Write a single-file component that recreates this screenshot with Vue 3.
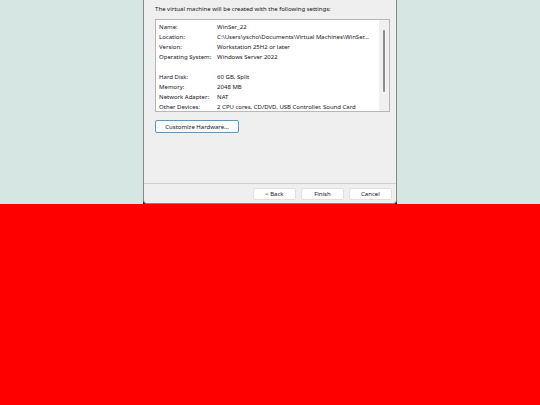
<script setup>
import { ref } from 'vue'

const settings = ref([
  { label: 'Name:', value: 'WinSer_22' },
  { label: 'Location:', value: 'C:\\Users\\yscho\\Documents\\Virtual Machines\\WinSer...' },
  { label: 'Version:', value: 'Workstation 25H2 or later' },
  { label: 'Operating System:', value: 'Windows Server 2022' },
  { label: '', value: '' },
  { label: 'Hard Disk:', value: '60 GB, Split' },
  { label: 'Memory:', value: '2048 MB' },
  { label: 'Network Adapter:', value: 'NAT' },
  { label: 'Other Devices:', value: '2 CPU cores, CD/DVD, USB Controller, Sound Card' },
])

const actions = ['< Back', 'Finish', 'Cancel']
</script>

<template>
  <div class="page">
    <section class="desktop">
      <div class="frame">
        <div class="dialog">
          <main class="content">
            <p class="intro">The virtual machine will be created with the following settings:</p>
            <div class="list">
              <table class="settings">
                <tbody>
                  <tr v-for="(row, i) in settings" :key="i">
                    <th scope="row">{{ row.label }}</th>
                    <td>{{ row.value }}</td>
                  </tr>
                </tbody>
              </table>
              <div class="track"><div class="thumb"></div></div>
            </div>
            <button type="button" class="customize">Customize Hardware...</button>
          </main>
          <footer class="actions">
            <button v-for="action in actions" :key="action" type="button">{{ action }}</button>
          </footer>
        </div>
      </div>
    </section>
    <section class="backdrop"></section>
  </div>
</template>

<style>
body {
  background: #ff0000;
}
</style>

<style scoped>
.page {
  display: flex;
  flex-direction: column;
  min-height: 100vh;
  font-family: "Noto Sans", "Open Sans", sans-serif;
  font-size: 6px;
  line-height: 10px;
  color: #14141c;
}

.desktop {
  display: flex;
  justify-content: center;
  background: #d6e6e3;
}

.backdrop {
  flex: 1;
  background: #ff0000;
}

/* dark backing that shows behind the rounded bottom corners */
.frame {
  width: 47%;
  min-width: 253px;
  background: #16161c;
}

.dialog {
  border: 1px solid #838987;
  border-top: 0;
  border-radius: 0 0 4px 4px;
  background: #efefef;
}

.content {
  padding: 4px 6px 50px 11px;
}

.intro {
  margin: 0 0 5px;
}

.list {
  display: flex;
  border: 1px solid #b4b7b7;
  background: #fff;
}

.settings {
  flex: 1;
  width: 100%;
  min-width: 0;
  margin: 2px 0 -1px 3px;
  border-collapse: collapse;
  table-layout: fixed;
}

.settings th,
.settings td {
  height: 10px;
  padding: 0;
  font-weight: normal;
  text-align: left;
  white-space: nowrap;
}

.settings th {
  width: 58px;
}

.track {
  display: flex;
  flex: none;
  justify-content: center;
  width: 10px;
  padding-top: 10px;
  background: #f0f0f0;
}

.thumb {
  width: 2px;
  height: 62px;
  border-radius: 1px;
  background: #8c8c8c;
}

button {
  box-sizing: border-box;
  height: 12px;
  padding: 0;
  border: 1px solid #e0e0e0;
  border-radius: 2px;
  background: #fdfdfd;
  font: inherit;
  line-height: 10px;
  color: inherit;
  white-space: nowrap;
}

.customize {
  display: block;
  width: 84px;
  height: 13px;
  margin-top: 8px;
  border-color: #4c9cd3;
}

.actions {
  display: flex;
  justify-content: flex-end;
  gap: 5px;
  padding: 4px 4px 3px;
  border-top: 1px solid #cfcfcf;
}

.actions button {
  width: 43px;
}
</style>
